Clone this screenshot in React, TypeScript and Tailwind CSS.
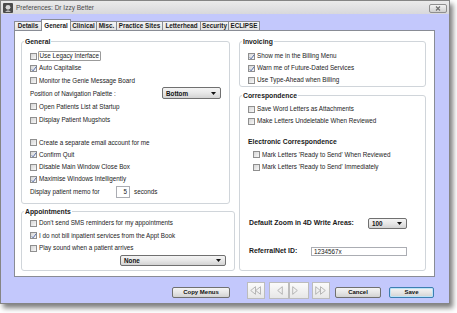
import React from "react";

function Check({ checked }: { checked?: boolean }) {
  return (
    <span className="relative block w-[7px] h-[7px] shrink-0 border border-[#8f8f8f] bg-linear-to-br from-[#d6d6d6] to-[#f8f8f8]">
      {checked && (
        <svg className="absolute left-[-1px] top-[-1px]" width="8" height="8" viewBox="0 0 8 8">
          <path d="M1.8 4.4 L3.1 5.8 L6.3 1.6" fill="none" stroke="#4560a0" strokeWidth="0.9" />
        </svg>
      )}
    </span>
  );
}

function Row({
  h,
  checked,
  children,
  extra = "",
  focus,
}: {
  h: string;
  checked?: boolean;
  children: React.ReactNode;
  extra?: string;
  focus?: boolean;
}) {
  return (
    <div className={`flex items-center ${h} ${extra}`}>
      <Check checked={checked} />
      {focus ? (
        <span className="ml-[1px] pl-[0.5px] pr-[1px] border border-[#9b9b9b] rounded-[1px] leading-[8px]">{children}</span>
      ) : (
        <span className="ml-[2px] whitespace-nowrap">{children}</span>
      )}
    </div>
  );
}

function Combo({ label, w, h, extra = "" }: { label: string; w: string; h: string; extra?: string }) {
  return (
    <div
      className={`${w} ${h} ${extra} shrink-0 flex items-center justify-between pl-[3px] pr-[4px] border border-[#707070] rounded-[2px] bg-linear-to-b from-[#f4f4f4] via-[#e7e7e7] to-[#d3d3d3] font-bold text-[6.3px] text-[#111]`}
    >
      <span>{label}</span>
      <svg width="5" height="3" viewBox="0 0 5 3">
        <path d="M0 0 H5 L2.5 3 Z" fill="#111" />
      </svg>
    </div>
  );
}

function Legend({ children }: { children: React.ReactNode }) {
  return <legend className="ml-[2px] px-[1px] font-bold text-[6.8px] leading-[9px] text-[#1a1a1a]">{children}</legend>;
}

function Btn({ label, w, h, def }: { label: string; w: string; h: string; def?: boolean }) {
  return (
    <div
      className={`${w} ${h} mt-[4.5px] shrink-0 flex items-center justify-center rounded-[2px] font-bold text-[6px] text-[#111] bg-linear-to-b from-[#f4f4f4] via-[#e6e6e6] to-[#d2d2d2] ${
        def ? "border border-[#3c7fb1] shadow-[inset_0_0_0_1px_#bde3f6]" : "border border-[#707070]"
      }`}
    >
      {label}
    </div>
  );
}

function NavBtn({ w, justify, children }: { w: string; justify: string; children: React.ReactNode }) {
  return (
    <div
      className={`${w} h-[17px] shrink-0 flex items-center ${justify} border border-[#bcbcbc] bg-linear-to-b from-[#fbfbfb] to-[#e7e7e7]`}
    >
      {children}
    </div>
  );
}

const tabs: [string, string][] = [
  ["Details", "w-[28px]"],
  ["General", "w-[30px]"],
  ["Clinical", "w-[27px]"],
  ["Misc.", "w-[21px]"],
  ["Practice Sites", "w-[47px]"],
  ["Letterhead", "w-[39px]"],
  ["Security", "w-[29px]"],
  ["ECLIPSE", "w-[32px]"],
];

export default function App() {
  return (
    <div className="w-[457px] h-[313px] bg-white font-['Liberation_Sans',Arial,sans-serif] text-[#222] text-[6.3px]">
      <div className="w-[450px] h-[304px] border border-[#858585] bg-[#c3c8fc] shadow-[3px_4px_5px_rgba(0,0,0,0.5)] flex flex-col">
        {/* Title bar */}
        <div className="h-[13px] shrink-0 flex items-center bg-linear-to-b from-[#ebebeb] to-[#d8d8db]">
          <svg className="ml-[2px]" width="10" height="10" viewBox="0 0 10 10">
            <rect x="0" y="0" width="10" height="10" rx="1" fill="#4b4b4b" />
            <circle cx="5" cy="4.3" r="2.4" fill="#d8d8d8" />
            <path d="M2 9 Q5 5.5 8 9 Z" fill="#bdbdbd" />
          </svg>
          <span className="ml-[3px] text-[6.5px] text-[#4a4a4a]">Preferences: Dr Izzy Better</span>
          <div className="ml-auto mr-[2px] mt-[1px] w-[18px] h-[9px] rounded-[2px] border border-[#8f8f8f] bg-linear-to-b from-[#f3f3f3] to-[#d0d0d0] flex items-center justify-center">
            <svg width="6" height="5" viewBox="0 0 6 5">
              <path d="M1 0.5 L5 4.5 M5 0.5 L1 4.5" stroke="#6d6d6d" strokeWidth="1.1" />
            </svg>
          </div>
        </div>

        {/* Body */}
        <div className="pl-[13px] pt-[5px] flex flex-col">
          {/* Tabs */}
          <div className="flex items-end h-[11px]">
            {tabs.map(([t, w], i) => {
              const sel = t === "General";
              return (
                <div
                  key={t}
                  className={`${w} ${i > 0 ? "-ml-[1px]" : ""} ${
                    sel
                      ? "h-[12px] mb-[-1px] relative z-10 bg-white"
                      : "h-[9px] bg-linear-to-b from-[#f5f5f5] to-[#e2e2e2]"
                  } shrink-0 flex items-center justify-center border-t border-l border-r border-[#898c95] font-bold text-[6.3px] text-[#1a1a1a] whitespace-nowrap`}
                >
                  {t}
                </div>
              );
            })}
          </div>

          {/* Panel */}
          <div className="w-[421px] h-[247px] border border-[#898c95] bg-white flex pl-[6px] pt-[6px] gap-[9px]">
            {/* Left column */}
            <div className="w-[209px] shrink-0 flex flex-col">
              <fieldset className="border border-[#d0d5da] rounded-[3px]">
                <Legend>General</Legend>
                <div className="flex flex-col px-[8px] pt-[4px] pb-[4.5px]">
                  <Row h="h-[12px]" focus>
                    Use Legacy Interface
                  </Row>
                  <Row h="h-[12px]" checked>
                    Auto Capitalise
                  </Row>
                  <Row h="h-[12.5px]">Monitor the Genie Message Board</Row>
                  <div className="flex items-center h-[13.5px]">
                    <span className="whitespace-nowrap">Position of Navigation Palette :</span>
                    <Combo label="Bottom" w="w-[59px]" h="h-[12px]" extra="ml-auto" />
                  </div>
                  <Row h="h-[13.5px]">Open Patients List at Startup</Row>
                  <Row h="h-[13px]">Display Patient Mugshots</Row>
                  <div className="h-[9.5px]" />
                  <Row h="h-[12.5px]">Create a separate email account for me</Row>
                  <Row h="h-[12.5px]" checked>
                    Confirm Quit
                  </Row>
                  <Row h="h-[12px]">Disable Main Window Close Box</Row>
                  <Row h="h-[12px]" checked>
                    Maximise Windows Intelligently
                  </Row>
                  <div className="flex items-center h-[13.5px]">
                    <span className="w-[86px] shrink-0 whitespace-nowrap">Display patient memo for</span>
                    <div className="w-[14px] h-[12px] shrink-0 border border-[#abadb3] bg-white flex items-center justify-end pr-[2px]">
                      5
                    </div>
                    <span className="ml-[4px]">seconds</span>
                  </div>
                </div>
              </fieldset>

              <fieldset className="mt-[2.5px] border border-[#d0d5da] rounded-[3px]">
                <Legend>Appointments</Legend>
                <div className="flex flex-col px-[8px] pt-[1.5px] pb-[4px]">
                  <Row h="h-[12px]">Don't send SMS reminders for my appointments</Row>
                  <Row h="h-[13px]" checked>
                    I do not bill inpatient services from the Appt Book
                  </Row>
                  <Row h="h-[12px]">Play sound when a patient arrives</Row>
                  <div className="flex mt-[1px] h-[11px]">
                    <Combo label="None" w="w-[106px]" h="h-[11px]" extra="ml-[90px]" />
                  </div>
                </div>
              </fieldset>
            </div>

            {/* Right column */}
            <div className="w-[187px] shrink-0 flex flex-col">
              <fieldset className="border border-[#d0d5da] rounded-[3px]">
                <Legend>Invoicing</Legend>
                <div className="flex flex-col px-[8px] pt-[4px]">
                  <Row h="h-[12px]" checked>
                    Show me in the Billing Menu
                  </Row>
                  <Row h="h-[12px]" checked>
                    Warn me of Future-Dated Services
                  </Row>
                  <Row h="h-[12px]">Use Type-Ahead when Billing</Row>
                </div>
              </fieldset>

              <fieldset className="mt-[3.5px] border border-[#d0d5da] rounded-[3px]">
                <Legend>Correspondence</Legend>
                <div className="flex flex-col px-[8px] pt-[3.5px] pb-[13.5px]">
                  <Row h="h-[12px]">Save Word Letters as Attachments</Row>
                  <Row h="h-[12px]">Make Letters Undeletable When Reviewed</Row>
                  <div className="mt-[9.5px] font-bold text-[6.8px] leading-[9px] text-[#1a1a1a] whitespace-nowrap">
                    Electronic Correspondence
                  </div>
                  <Row h="h-[12.5px]" extra="mt-[2.5px] pl-[5px]">
                    Mark Letters 'Ready to Send' When Reviewed
                  </Row>
                  <Row h="h-[13px]" extra="pl-[5px]">
                    Mark Letters 'Ready to Send' Immediately
                  </Row>
                  <div className="mt-[44px] h-[11.5px] flex items-center">
                    <span className="w-[120px] shrink-0 pl-[1px] font-bold text-[6.9px] text-[#1a1a1a] whitespace-nowrap">
                      Default Zoom in 4D Write Areas:
                    </span>
                    <Combo label="100" w="w-[39px]" h="h-[11px]" />
                  </div>
                  <div className="mt-[17.5px] h-[10px] flex items-center">
                    <span className="w-[63px] shrink-0 pl-[1px] font-bold text-[6.9px] text-[#1a1a1a] whitespace-nowrap">
                      ReferralNet ID:
                    </span>
                    <div className="w-[96px] h-[9px] shrink-0 border border-[#abadb3] bg-white flex items-center pl-[2px] text-[6.3px]">
                      1234567x
                    </div>
                  </div>
                </div>
              </fieldset>
            </div>
          </div>

          {/* Buttons */}
          <div className="w-[421px] mt-[5px] h-[17px] pr-[1px] flex items-start justify-end">
            <Btn label="Copy Menus" w="w-[58px]" h="h-[11.5px]" />
            <div className="ml-[17px] flex">
              <NavBtn w="w-[18px]" justify="justify-center">
                <svg width="12" height="9" viewBox="0 0 12 9">
                  <path d="M0.7 4.5 L5.5 0.7 L5.5 8.3 Z M5.7 4.5 L10.5 0.7 L10.5 8.3 Z" fill="none" stroke="#a8a8a8" strokeWidth="0.8" />
                </svg>
              </NavBtn>
            </div>
            <div className="ml-[4px] flex">
              <NavBtn w="w-[20px]" justify="justify-end pr-[5px]">
                <svg width="6" height="9" viewBox="0 0 6 9">
                  <path d="M0.7 4.5 L5.3 0.7 L5.3 8.3 Z" fill="none" stroke="#a8a8a8" strokeWidth="0.8" />
                </svg>
              </NavBtn>
              <NavBtn w="w-[20px]" justify="justify-start pl-[1.5px]">
                <svg width="6" height="9" viewBox="0 0 6 9">
                  <path d="M5.3 4.5 L0.7 0.7 L0.7 8.3 Z" fill="none" stroke="#a8a8a8" strokeWidth="0.8" />
                </svg>
              </NavBtn>
            </div>
            <div className="ml-[3px] flex">
              <NavBtn w="w-[18px]" justify="justify-center">
                <svg width="12" height="9" viewBox="0 0 12 9">
                  <path d="M5.3 4.5 L0.7 0.7 L0.7 8.3 Z M10.3 4.5 L5.5 0.7 L5.5 8.3 Z" fill="none" stroke="#a8a8a8" strokeWidth="0.8" />
                </svg>
              </NavBtn>
            </div>
            <div className="ml-[5px] flex">
              <Btn label="Cancel" w="w-[46px]" h="h-[11px]" />
            </div>
            <div className="ml-[8px] flex">
              <Btn label="Save" w="w-[45px]" h="h-[11.5px]" def />
            </div>
          </div>
        </div>
      </div>
    </div>
  );
}
